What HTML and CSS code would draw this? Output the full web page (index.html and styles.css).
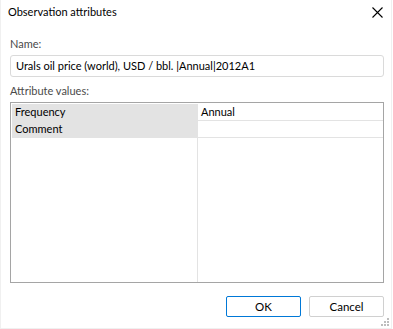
FILE: index.html
```html
<!DOCTYPE html>
<html lang="en">
<head>
    <meta charset="UTF-8">
    <meta name="viewport" content="width=device-width, initial-scale=1.0">
    <title>Observation attributes</title>
    <link rel="stylesheet" href="styles.css">
</head>
<body>
    <div class="dialog">
        <div class="titlebar">
            <span class="title">Observation attributes</span>
            <svg class="close" width="11" height="11" viewBox="0 0 11 11">
                <path d="M0.5 0.5 L10.5 10.5 M10.5 0.5 L0.5 10.5" stroke="#000" stroke-width="1.1" fill="none"/>
            </svg>
        </div>

        <div class="content">
            <div class="label">Name:</div>
            <div class="name-box">Urals oil price (world), USD / bbl. |Annual|2012A1</div>

            <div class="label label-attr">Attribute values:</div>
            <div class="grid">
                <div class="col col-keys">
                    <div class="row">Frequency</div>
                    <div class="row">Comment</div>
                </div>
                <div class="col col-values">
                    <div class="row">Annual</div>
                    <div class="row"></div>
                </div>
            </div>

            <div class="buttons">
                <button type="button" class="btn btn-default">OK</button>
                <button type="button" class="btn">Cancel</button>
            </div>
        </div>

        <!-- size grip -->
        <svg class="grip" width="9" height="9" viewBox="0 0 9 9">
            <rect x="6" y="0" width="2" height="2" fill="#bdbdbd"/>
            <rect x="3" y="3" width="2" height="2" fill="#bdbdbd"/>
            <rect x="6" y="3" width="2" height="2" fill="#bdbdbd"/>
            <rect x="0" y="6" width="2" height="2" fill="#bdbdbd"/>
            <rect x="3" y="6" width="2" height="2" fill="#bdbdbd"/>
            <rect x="6" y="6" width="2" height="2" fill="#bdbdbd"/>
        </svg>
    </div>
</body>
</html>
```

FILE: styles.css
```css
* {
    box-sizing: border-box;
}

body {
    margin: 0;
    font-family: Lato, "Noto Sans", sans-serif;
    font-size: 11px;
    color: #000;
    background-color: #fff;
}

.dialog {
    position: relative;
    width: 392px;
    height: 329px;
    border: 1px solid #f0f0f0;
    border-top: none;
    background-color: #fff;
}

.titlebar {
    height: 25px;
    display: flex;
    align-items: center;
    justify-content: space-between;
    padding: 0 8px 1px 7px;
}

.title {
    line-height: 16px;
}

.close {
    display: block;
    margin-top: 1px;
}

.content {
    padding: 11px 7px 0 9px;
}

.label {
    color: #4a4a4a;
    line-height: 16px;
    height: 16px;
}

.name-box {
    margin-top: 3px;
    height: 22px;
    border: 1px solid #dadada;
    border-radius: 3px;
    padding: 0 5px;
    line-height: 20px;
    white-space: nowrap;
}

.label-attr {
    margin-top: 6px;
}

.grid {
    margin-top: 3px;
    height: 181px;
    border: 1px solid #a5a5a5;
    padding: 1px 0 0 1px;
    display: flex;
}

.col {
    display: flex;
    flex-direction: column;
}

.col-keys {
    width: 186px;
    border-right: 1px solid #e3e3e3;
}

.col-keys .row {
    background-color: #e3e3e3;
    height: 17px;
    line-height: 16px;
    padding-left: 3px;
}

.col-values {
    flex: 1;
}

.col-values .row {
    height: 17px;
    line-height: 16px;
    padding-left: 3px;
    border-bottom: 1px solid #e3e3e3;
}

.buttons {
    margin-top: 13px;
    display: flex;
    justify-content: flex-end;
    gap: 8px;
}

.btn {
    width: 75px;
    height: 21px;
    padding: 0;
    font-family: inherit;
    font-size: 11.5px;
    color: #000;
    background-color: #fff;
    border: 1px solid #d0d0d0;
    border-radius: 2px;
}

.btn-default {
    border-color: #0078d7;
}

.grip {
    position: absolute;
    right: 1px;
    bottom: 1px;
}
```
